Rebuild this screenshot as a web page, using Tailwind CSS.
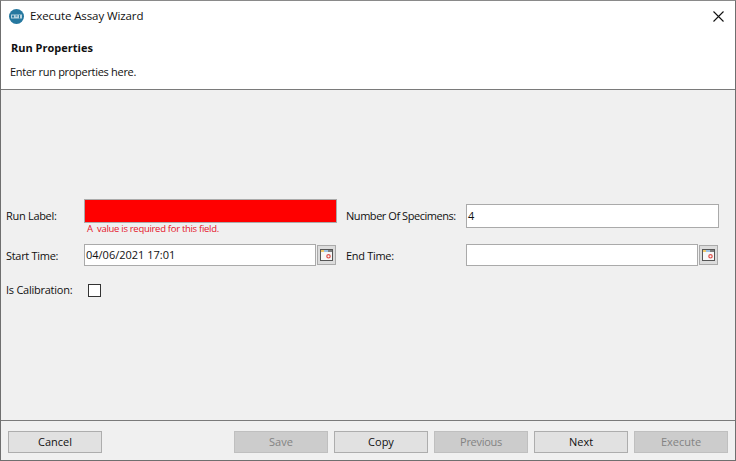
<!DOCTYPE html>
<html>
<head>
<meta charset="utf-8">
<script src="https://cdn.jsdelivr.net/npm/@tailwindcss/browser@4"></script>
</head>
<body class="m-0 bg-white">
<div class="w-[736px] h-[461px] flex flex-col border border-[#6f6f6f] border-t-[#8a8a8a] overflow-hidden font-['Open_Sans','Noto_Sans',sans-serif] text-[11px] text-[#111] bg-[#f0f0f0]">
  <!-- title + header -->
  <div class="h-[88px] shrink-0 bg-white flex flex-col">
    <div class="h-[30px] flex items-center pl-[8px] pr-[11px]">
      <svg class="w-[15px] h-[15px] shrink-0" viewBox="0 0 15 15"><circle cx="7.5" cy="7.5" r="7.5" fill="#26789f"/><rect x="2" y="5.5" width="11" height="4" fill="#b9d4e0"/><rect x="3" y="6.5" width="2" height="2" fill="#26789f"/><rect x="6.5" y="6.5" width="2" height="1" fill="#26789f"/><rect x="10" y="6" width="1" height="3.5" fill="#26789f"/></svg>
      <span class="ml-[6px] text-[11.5px] tracking-[-0.1px] leading-none">Execute Assay Wizard</span>
      <svg class="ml-auto w-[11px] h-[11px]" viewBox="0 0 11 11"><path d="M.5.5l10 10M10.5.5l-10 10" stroke="#111" stroke-width="1.1" fill="none"/></svg>
    </div>
    <div class="pl-[10px] mt-[9px] font-bold leading-[15px]">Run Properties</div>
    <div class="pl-[9px] mt-[9px] tracking-[-0.3px] leading-[15px]">Enter run properties here.</div>
  </div>
  <!-- body -->
  <div class="flex-1 border-y border-[#7a7a7a] pt-[109px] pl-[5px] pr-[16px]">
    <div class="grid grid-cols-[78px_253px_129px_253px] items-start">
      <div class="pt-[9px] tracking-[-0.3px] leading-[15px]">Run Label:</div>
      <div>
        <div class="h-[24px] bg-[#ff0000] border border-[#aaaaaa]"></div>
        <div class="pl-[3px] text-[9.5px] tracking-[-0.3px] leading-[11px] text-[#e5142a]">A&nbsp; value is required for this field.</div>
      </div>
      <div class="pl-[9px] pt-[9px] whitespace-nowrap tracking-[-0.45px] leading-[15px]">Number Of Specimens:</div>
      <div class="mt-[5px] h-[24px] bg-white border border-[#aaaaaa] pl-[1px] leading-[21px]">4</div>

      <div class="mt-[10px] h-[22px] flex items-center pt-[2px] tracking-[-0.3px]">Start Time:</div>
      <div class="mt-[10px] flex gap-[1px]">
        <div class="w-[232px] h-[22px] bg-white border border-[#aaaaaa] pl-[1px] leading-[20px]">04/06/2021 17:01</div>
        <div class="w-[19px] h-[20px] mt-[1px] bg-[#dcdcdc] border border-[#aaaaaa] flex items-center justify-center">
          <svg class="w-[13px] h-[12px]" viewBox="0 0 13 12"><rect x=".5" y=".5" width="12" height="11" fill="#f7f7f7" stroke="#555"/><rect x="1" y="1" width="11" height="2" fill="#7f7f7f"/><rect x="1" y="1" width="3" height="2" fill="#f0c96a"/><rect x="4" y="1" width="4" height="2" fill="#9ec3e6"/><circle cx="8.5" cy="7.3" r="1.7" fill="none" stroke="#e0504a" stroke-width="1.2"/></svg>
        </div>
      </div>
      <div class="mt-[10px] pl-[9px] h-[22px] flex items-center pt-[2px] tracking-[-0.3px]">End Time:</div>
      <div class="mt-[10px] flex gap-[1px]">
        <div class="w-[232px] h-[22px] bg-white border border-[#aaaaaa]"></div>
        <div class="w-[19px] h-[20px] mt-[1px] bg-[#dcdcdc] border border-[#aaaaaa] flex items-center justify-center">
          <svg class="w-[13px] h-[12px]" viewBox="0 0 13 12"><rect x=".5" y=".5" width="12" height="11" fill="#f7f7f7" stroke="#555"/><rect x="1" y="1" width="11" height="2" fill="#7f7f7f"/><rect x="1" y="1" width="3" height="2" fill="#f0c96a"/><rect x="4" y="1" width="4" height="2" fill="#9ec3e6"/><circle cx="8.5" cy="7.3" r="1.7" fill="none" stroke="#e0504a" stroke-width="1.2"/></svg>
        </div>
      </div>

      <div class="mt-[16px] tracking-[-0.25px] leading-[15px]">Is Calibration:</div>
      <div class="mt-[18px] pl-[4px]"><div class="w-[13px] h-[13px] bg-white border border-[#333]"></div></div>
    </div>
  </div>
  <!-- footer -->
  <div class="h-[39px] shrink-0 flex items-start pt-[10px] pl-[7px] pr-[7px] gap-[6px]">
    <div class="w-[94px] h-[22px] flex items-center justify-center bg-[#e1e1e1] border border-[#adadad]">Cancel</div>
    <div class="w-[94px] h-[22px] ml-[126px] flex items-center justify-center bg-[#cccccc] border border-[#bfbfbf] text-[#838383]">Save</div>
    <div class="w-[94px] h-[22px] flex items-center justify-center bg-[#e1e1e1] border border-[#adadad]">Copy</div>
    <div class="w-[94px] h-[22px] flex items-center justify-center bg-[#cccccc] border border-[#bfbfbf] text-[#838383] tracking-[-0.3px]">Previous</div>
    <div class="w-[94px] h-[22px] flex items-center justify-center bg-[#e1e1e1] border border-[#adadad]">Next</div>
    <div class="w-[94px] h-[22px] flex items-center justify-center bg-[#cccccc] border border-[#bfbfbf] text-[#838383]">Execute</div>
  </div>
</div>
</body>
</html>
